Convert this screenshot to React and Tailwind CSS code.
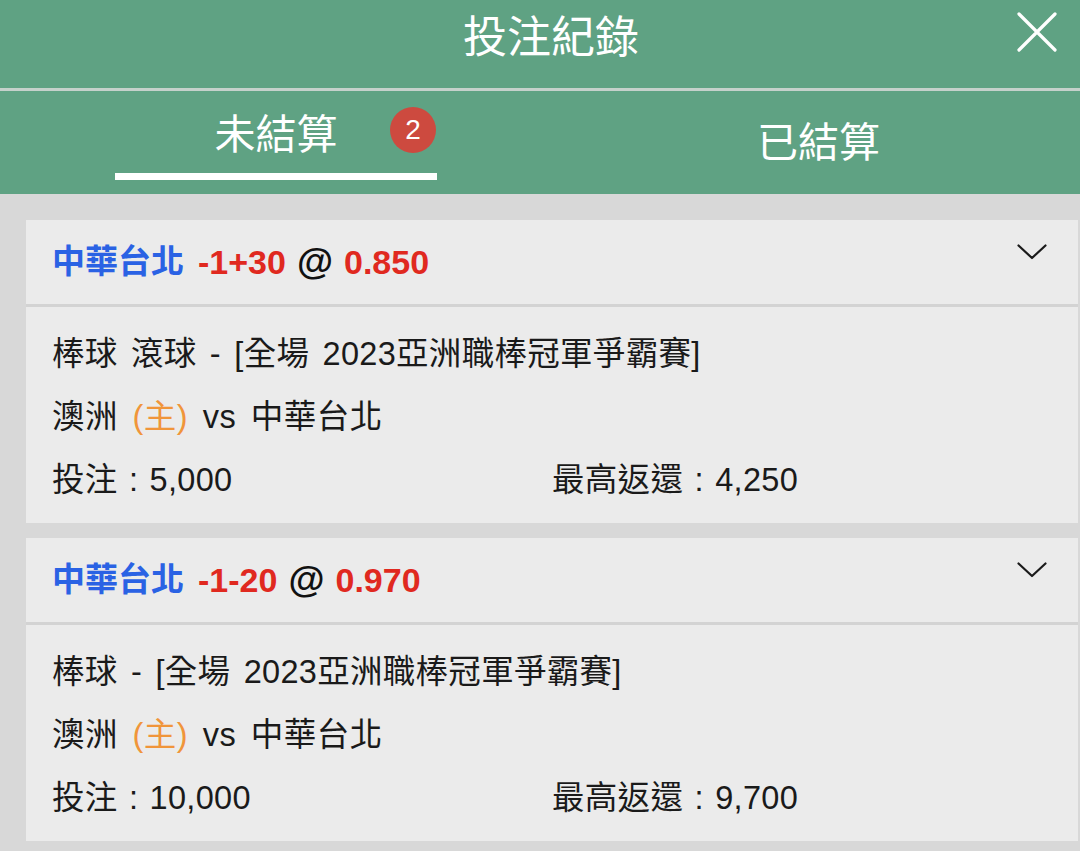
import React from "react";

const font = { fontFamily: '"Liberation Sans", "Noto Sans CJK TC", sans-serif' };

const bets = [
    {
        team: "中華台北",
        line: "-1+30",
        odds: "0.850",
        title: "棒球 滾球 - [全場 2023亞洲職棒冠軍爭霸賽]",
        stake: "5,000",
        payout: "4,250",
    },
    {
        team: "中華台北",
        line: "-1-20",
        odds: "0.970",
        title: "棒球 - [全場 2023亞洲職棒冠軍爭霸賽]",
        stake: "10,000",
        payout: "9,700",
    },
];

const Chevron = () => (
    <svg width="30" height="16" viewBox="0 0 30 16" fill="none">
        <path d="M1.5 1.5 L15 14 L28.5 1.5" stroke="#1a1a1a" strokeWidth="2.2" strokeLinecap="round" strokeLinejoin="round" />
    </svg>
);

const CloseIcon = () => (
    <svg width="40" height="40" viewBox="0 0 40 40" fill="none">
        <path d="M2 2 L38 38 M38 2 L2 38" stroke="#ffffff" strokeWidth="3.2" strokeLinecap="round" />
    </svg>
);

const BetCard = ({ bet }) => (
    <div className="ml-[26px] mr-[2px] bg-[#ebebeb]">
        {/* header */}
        <div className="h-[87px] flex justify-between pl-[26px] pr-[31px] border-b-[3px] border-[#d3d3d3]">
            <div className="flex items-center gap-[14px] text-[33px] font-bold">
                <span className="text-[#2a62e4]">{bet.team}</span>
                <span className="flex items-center gap-[11px] text-[34px]">
                    <span className="text-[#e0291f]">{bet.line}</span>
                    <span className="text-[#111] text-[37px]">@</span>
                    <span className="text-[#e0291f]">{bet.odds}</span>
                </span>
            </div>
            <div className="pt-[24px]">
                <Chevron />
            </div>
        </div>
        {/* body */}
        <div className="pl-[26px] pt-[16px] pb-[11px] text-[32.5px] leading-[63px] text-[#1a1a1a]">
            <div className="tracking-[0.3px] [word-spacing:4px]">{bet.title}</div>
            <div className="tracking-[0.5px] [word-spacing:5px]">
                澳洲 <span className="text-[#f0953a]">(主)</span> vs 中華台北
            </div>
            <div className="flex [word-spacing:2px] tracking-[0.3px]">
                <div className="w-[500px]">投注 : {bet.stake}</div>
                <div>最高返還 : {bet.payout}</div>
            </div>
        </div>
    </div>
);

export default function App() {
    return (
        <div className="w-[1080px] h-[851px] overflow-hidden bg-[#d8d8d8]" style={font}>
            {/* top bar */}
            <div className="relative h-[88px] bg-[#5fa283] flex items-center justify-center">
                <h1 className="text-[44px] text-white pb-[12px] pl-[22px]">投注紀錄</h1>
                <div className="absolute right-[23px] top-[12px]">
                    <CloseIcon />
                </div>
            </div>
            <div className="h-[3px] bg-[#c5d1cb]" />

            {/* tabs */}
            <div className="h-[103px] bg-[#5fa283] flex text-white">
                <div className="flex-1">
                    <div className="relative ml-[115px] w-[322px] h-full flex flex-col items-center">
                        <div className="text-[41px] leading-[41px] mt-[24px]">未結算</div>
                        <span className="absolute left-[275px] top-[16px] w-[46px] h-[46px] rounded-full bg-[#cd4a3f] flex items-center justify-center text-[28px] leading-none">
                            2
                        </span>
                        <div className="mt-auto mb-[14px] h-[7px] w-full bg-white" />
                    </div>
                </div>
                <div className="flex-1 flex justify-center pl-[34px]">
                    <div className="text-[41px] leading-[41px] mt-[32px]">已結算</div>
                </div>
            </div>

            {/* list */}
            <div className="pt-[26px] flex flex-col gap-[15px]">
                {bets.map((b, i) => (
                    <BetCard key={i} bet={b} />
                ))}
            </div>
        </div>
    );
}
